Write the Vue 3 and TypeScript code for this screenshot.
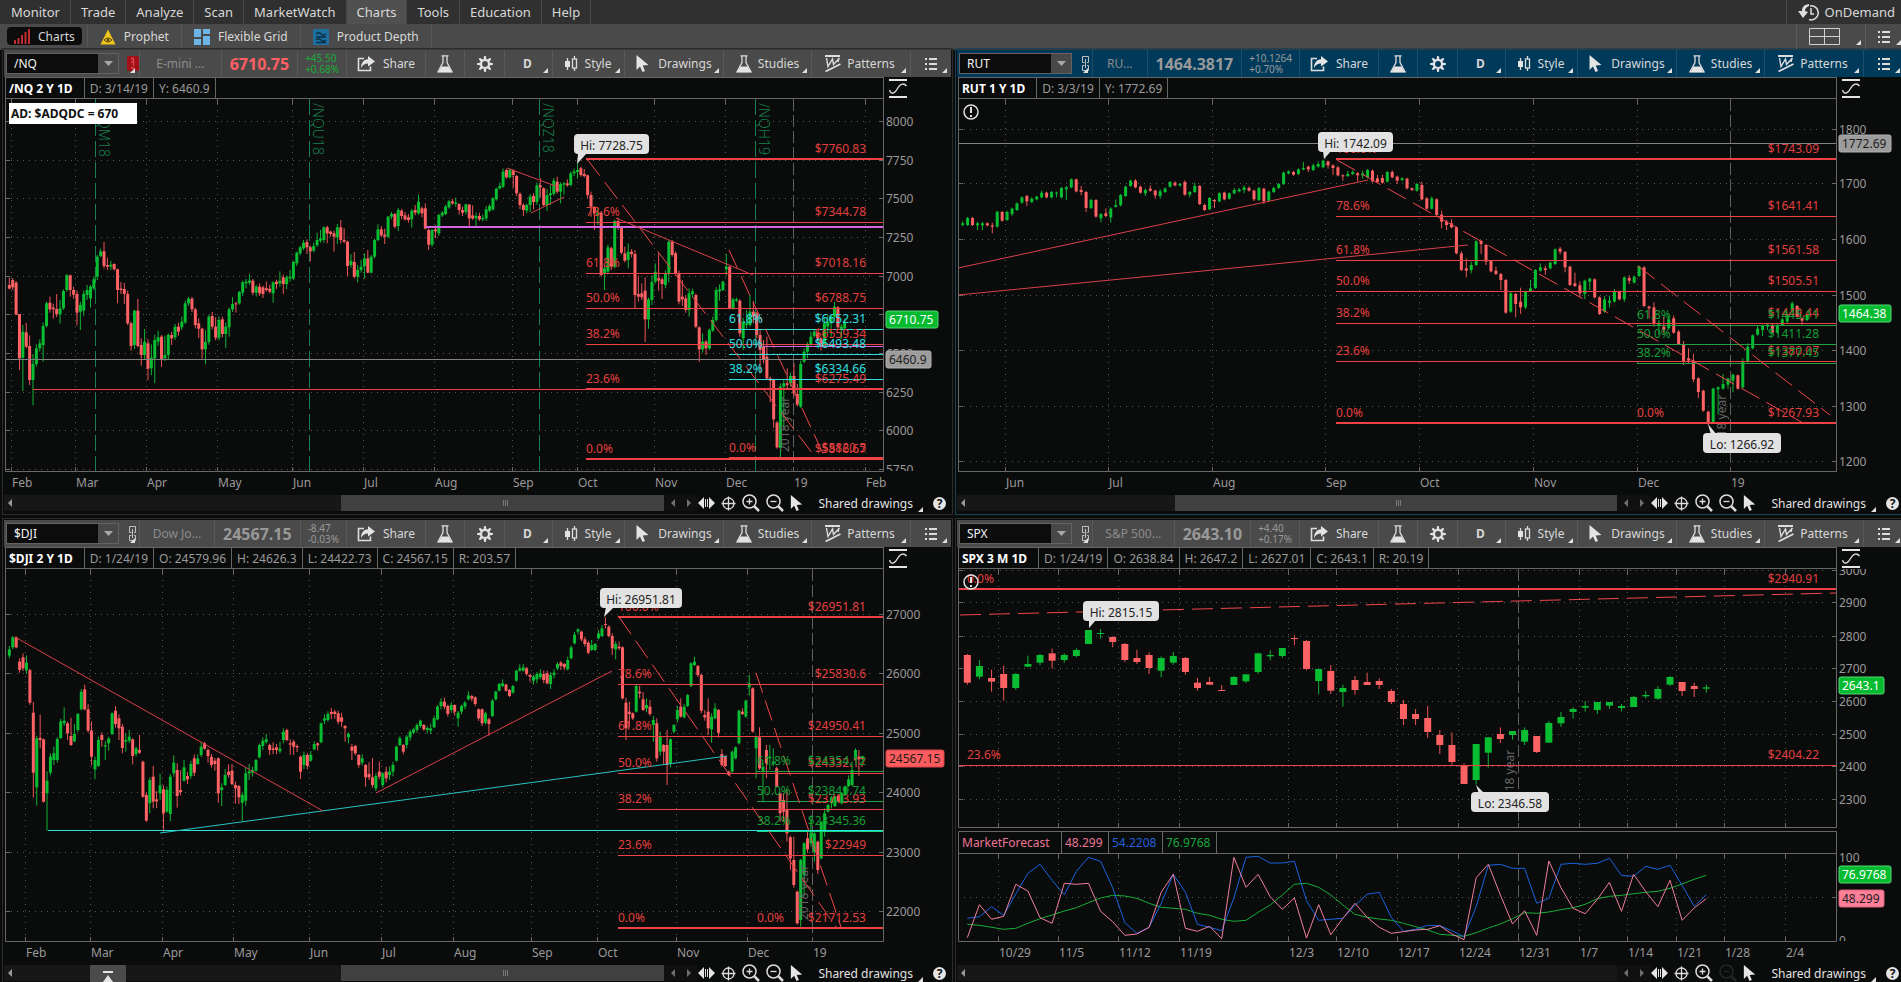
<script setup lang="ts">
interface Tick { at: number; label: string }
interface Line { x1: number; y1: number; x2: number; y2: number; kind: string }
interface Note { x: number; y: number; text: string; kind: string }
interface Balloon { x: number; y: number; w: number; text: string; tip: string }
interface Tag { y: number; w: number; text: string; kind: string }
interface Chart {
  symbol: string
  alert: boolean
  description: string
  price: string
  change: string[]
  tone: string
  title: string
  readings: string[]
  plotBottom: number
  xTicks: Tick[]
  yTicks: Tick[]
  yearAt: number
  yearTextY: number
  crosshair: number | null
  expirations: Note[]
  candles: Candle[]
  bodyWidth: number
  lines: Line[]
  notes: Note[]
  balloons: Balloon[]
  tags: Tag[]
  warning: boolean
  thumb: { left: number; width: number } | null
  zoomOut: boolean
}
interface Candle { x: number; top: number; height: number; high: number; low: number; up: boolean }

const RIGHT = 879

/* Candles are packed as "open close upperWick lowerWick", in thirds of a chart unit. */
function unpack(data: string, first: number, last: number, shift: number): Candle[] {
  const rows = data.split(',').map((r) => r.trim().split(' ').map(Number))
  const step = (last - first) / (rows.length - 1)
  return rows.map(([open, close, above, below], i) => {
    const top = Math.min(open, close)
    const bottom = Math.max(open, close)
    return {
      x: (first + i * step) / 3,
      top: (top + shift) / 3,
      height: Math.max(1, (bottom - top) / 3),
      high: (top - above + shift) / 3,
      low: (bottom + below + shift) / 3,
      up: close < open,
    }
  })
}

function ticks(data: string): Tick[] {
  return data.split(' ').map((pair) => {
    const [label, at] = pair.split('@')
    return { label, at: Number(at) }
  })
}

/* Thin horizontal lines sit on half units so that they fill one row of pixels. */
function line(x1: number, y1: number, x2: number, y2: number, kind: string): Line {
  const nudge = y1 === y2 && !kind.includes('heavy') ? 0.5 : 0
  return { x1, y1: y1 + nudge, x2, y2: y2 + nudge, kind }
}

/* Retracement levels: "y|percent|price", with an optional "!" for a heavy line. */
function levels(x: number, kind: string, data: string): { lines: Line[]; notes: Note[] } {
  const lines: Line[] = []
  const notes: Note[] = []
  for (const row of data.split(' ')) {
    const [yText, percent, price] = row.split('|')
    const heavy = yText.endsWith('!')
    const y = parseInt(yText, 10)
    const tone = percent === '0.0%' ? 'red' : kind
    lines.push(line(x, y, RIGHT, y, heavy ? tone + ' heavy' : tone))
    if (percent) notes.push({ x: Math.max(x, 10), y: y - 6, text: percent, kind: tone })
    if (price) notes.push({ x: 862, y: y - 6, text: '$' + price, kind: tone + ' end' })
  }
  return { lines, notes }
}

const nqFib = levels(582, 'red', '60!||7760.83 123|78.6%|7344.78 174|61.8%|7018.16 209|50.0%|6788.75 245|38.2%|6559.34 290!|23.6%|6275.49 360!|0.0%|5816.67')
const nqFib2 = levels(725, 'cyan', '230|61.8%|6652.31 255|50.0%|6493.48 280|38.2%|6334.66 359!|0.0%|5820.5')
const rutFib = levels(379, 'red', '60!|100.0%|1743.09 117|78.6%|1641.41 161|61.8%|1561.58 192|50.0%|1505.51 224|38.2%|1449.44 262|23.6%|1380.07 324!|0.0%|1267.93')
const rutFib2 = levels(680, 'green', '226|61.8%|1445.11 245|50.0%|1411.28 264|38.2%|1377.45 324|0.0%|')
const djiFib = levels(614, 'red', '48!|100.0%|26951.81 115|78.6%|25830.6 167|61.8%|24950.41 204|50.0%|24332.17 240|38.2%|23713.93 286|23.6%|22949 359!|0.0%|21712.53')
const djiFib2 = levels(753, 'green', '202|61.8%|24354.12 232|50.0%|23849.74 262!|38.2%|23345.36 359|0.0%|')
const spxFib = levels(1, 'red', '20!|0.0%|2940.91 196|23.6%|2404.22')

const charts: Chart[] = [
  {
    symbol: '/NQ', alert: true, description: 'E-mini ...', price: '6710.75', change: ['+45.50', '+0.68%'], tone: 'live',
    title: '/NQ 2 Y 1D', readings: ['D: 3/14/19', 'Y: 6460.9'], plotBottom: 372,
    xTicks: ticks('Feb@7 Mar@71 Apr@142 May@213 Jun@288 Jul@359 Aug@430 Sep@508 Oct@573 Nov@650 Dec@721 19@789 Feb@861'),
    yTicks: ticks('8000@22 7750@61 7500@99 7250@138 7000@177 @215 6500@254 6250@293 6000@331 5750@370'),
    yearAt: 789, yearTextY: 353, crosshair: 260,
    expirations: [
      { x: 91, y: 4, text: '/NQM18', kind: '' }, { x: 305, y: 4, text: '/NQU18', kind: '' },
      { x: 535, y: 4, text: '/NQZ18', kind: '' }, { x: 751, y: 4, text: '/NQH19', kind: '' },
    ],
    candles: unpack('585 596 22 2,570 592 5 8,578 674 5 0,672 805 0 35,803 725 20 100,727 770 28 5,768 870 32 15,870 822 30 76,822 775 12 8,775 760 12 10,765 708 10 50,708 640 5 4,638 658 18 10,653 658 12 28,657 673 45 8,673 655 25 28,655 603 5 5,600 556 4 5,556 600 2 20,600 614 10 12,612 668 10 38,665 645 10 55,662 612 10 15,615 600 15 15,625 590 5 28,595 568 10 6,560 500 5 10,498 484 8 4,484 528 28 8,525 530 22 10,530 524 12 10,522 538 2 4,538 600 2 40,596 600 20 12,597 612 18 30,612 700 10 5,700 768 5 14,765 662 3 12,662 768 35 4,765 795 20 32,795 755 38 12,760 836 12 34,835 803 40 20,805 750 15 75,755 742 20 12,740 808 5 22,805 795 58 8,795 735 5 12,735 745 10 20,742 710 8 8,710 725 12 12,712 695 15 8,697 640 8 5,640 626 5 8,626 658 5 8,658 705 5 10,700 716 15 28,716 778 3 28,778 756 35 45,756 680 5 8,678 710 12 8,710 743 28 8,743 690 10 8,688 732 8 10,732 710 12 42,712 658 5 28,658 642 20 8,640 643 5 25,640 606 3 4,608 577 5 10,580 575 8 15,578 572 20 6,572 608 5 8,608 590 5 12,590 610 10 8,592 612 5 12,595 600 20 5,596 605 12 5,610 577 3 28,575 582 6 15,580 572 28 10,562 582 8 30,582 562 5 15,565 560 20 10,565 516 3 5,520 488 3 8,490 472 5 6,475 458 8 5,456 472 8 20,472 484 5 30,482 468 10 5,466 450 22 5,452 445 25 6,450 412 3 8,412 430 5 30,425 432 3 8,430 440 8 45,442 412 10 20,412 450 22 10,450 455 35 5,455 528 3 30,525 512 20 8,516 560 30 5,560 540 15 17,540 530 20 8,528 505 15 38,505 548 25 2,548 500 5 2,500 450 4 5,450 418 15 4,418 436 10 6,434 440 18 22,440 380 2 5,380 372 6 8,372 410 3 5,408 360 6 15,362 378 5 10,376 388 10 4,382 390 10 8,388 362 5 25,360 368 15 8,370 335 22 5,355 370 5 12,355 416 15 2,420 464 5 16,464 420 3 6,418 424 12 20,430 375 4 8,376 368 5 5,372 350 5 4,352 334 4 4,334 340 8 5,342 338 15 8,342 360 2 14,360 368 10 10,366 343 2 8,344 385 2 26,376 385 30 5,385 378 10 28,378 388 10 5,388 384 10 6,385 358 10 8,362 348 5 4,358 325 3 4,328 296 3 4,295 288 10 4,290 245 10 4,240 262 4 4,262 240 4 4,242 255 4 38,258 310 3 8,312 345 5 12,345 360 5 18,362 345 4 8,345 320 8 22,318 336 8 22,336 286 8 8,286 292 22 30,295 345 3 4,345 315 18 18,315 310 25 30,312 272 8 5,275 305 15 5,305 282 5 35,284 280 5 30,280 286 12 4,285 250 5 4,250 244 8 8,246 240 20 20,235 255 5 5,252 258 15 5,256 315 2 10,315 350 10 30,350 370 0 50,375 368 15 30,368 555 5 5,550 535 8 50,545 472 8 8,475 530 5 10,530 393 4 5,393 412 10 8,412 488 4 5,490 512 20 5,510 485 25 25,485 492 8 10,492 615 12 42,612 620 55 15,610 622 30 8,602 688 40 68,688 628 5 28,630 576 20 15,575 545 25 5,565 572 75 30,568 582 6 45,585 550 8 10,552 455 4 25,455 495 5 5,490 550 6 8,550 635 8 8,620 628 50 20,625 660 10 8,660 610 15 20,612 604 8 10,615 710 4 5,712 778 3 38,778 755 25 10,755 775 5 20,775 720 5 5,722 690 10 4,690 600 8 5,604 598 15 28,600 575 3 3,538 530 38 18,530 655 3 3,655 628 5 4,632 628 5 4,632 730 4 10,745 695 12 35,705 700 40 10,705 665 50 5,665 680 32 20,670 735 4 10,735 780 15 70,770 808 20 12,800 865 60 5,865 872 5 65,870 988 4 25,998 1072 5 4,1074 890 10 30,890 880 10 130,880 885 45 10,880 858 10 10,858 910 38 10,912 944 30 5,950 822 10 4,815 785 10 4,785 762 5 20,762 740 15 5,738 725 5 5,730 745 4 8,745 768 4 14,768 700 15 4,710 695 20 20,700 680 5 40,680 650 14 4,652 712 4 8,718 710 8 30,715 695 10 5', 16, 2522, -27),
    bodyWidth: 3,
    lines: [
      line(29, 290, RIGHT, 290, 'red'), ...nqFib.lines, ...nqFib2.lines,
      line(422, 128, RIGHT, 128, 'purple heavy'), line(759, 247, RIGHT, 247, 'purple'),
      line(583, 60, 812, 359, 'red dashed'), line(725, 151, 821, 359, 'red dashed'),
      line(503, 69, 554, 88, 'red trend'), line(527, 114, 560, 98, 'red trend'), line(612, 119, 749, 176, 'red trend'),
    ],
    notes: [...nqFib.notes, ...nqFib2.notes],
    balloons: [{ x: 570, y: 35, w: 75, text: 'Hi: 7728.75', tip: 'M574 55 L573 65 L582 55 Z' }],
    tags: [{ y: 212, w: 52, text: '6710.75', kind: 'up' }, { y: 252, w: 45, text: '6460.9', kind: 'cursor' }],
    warning: false, thumb: { left: 51, width: 49 }, zoomOut: true,
  },
  {
    symbol: 'RUT', alert: false, description: 'RU...', price: '1464.3817', change: ['+10.1264', '+0.70%'], tone: 'selected',
    title: 'RUT 1 Y 1D', readings: ['D: 3/3/19', 'Y: 1772.69'], plotBottom: 372,
    xTicks: ticks('Jun@48 Jul@151 Aug@255 Sep@368 Oct@462 Nov@576 Dec@680 19@773'),
    yTicks: ticks('1800@30 1700@84 1600@140 1500@196 1400@251 1300@307 1200@362'),
    yearAt: 773, yearTextY: 351, crosshair: 44, expirations: [],
    candles: unpack('345 340 6 4,345 324 3 3,324 345 3 3,346 340 4 14,346 340 4 14,340 346 3 3,346 350 8 20,350 305 2 3,306 332 3 3,330 306 4 3,312 296 3 6,300 280 3 3,278 262 3 3,258 274 3 14,276 266 4 3,268 260 3 3,262 248 6 3,248 262 3 3,262 246 3 3,250 248 3 12,262 234 3 3,238 232 4 32,232 208 3 3,208 244 2 3,240 246 12 10,246 294 3 12,294 270 4 3,270 320 3 3,325 312 3 12,310 318 15 4,322 296 4 16,290 285 16 3,286 255 3 3,258 230 3 3,228 212 3 3,212 232 5 3,230 248 3 3,250 240 4 8,236 242 10 3,242 256 3 10,258 244 6 8,246 236 4 3,230 216 3 3,218 226 4 3,226 222 3 4,216 254 5 3,254 246 3 8,246 228 10 3,228 282 3 3,285 300 4 3,298 264 3 3,270 274 3 20,274 250 3 3,248 268 3 3,266 250 3 3,250 240 6 3,244 238 4 3,240 232 6 10,234 242 5 3,242 268 3 5,270 234 3 3,236 274 3 8,272 245 3 3,246 234 4 3,234 222 3 3,222 188 3 3,190 184 3 3,186 194 3 3,192 178 3 3,178 174 18 3,170 178 3 8,180 166 5 3,170 162 8 3,172 152 3 3,154 166 2 10,166 174 3 20,172 196 3 3,196 198 3 14,198 192 10 3,192 186 5 3,190 196 4 18,196 190 8 10,202 180 3 3,182 214 3 3,205 216 10 3,204 218 10 3,215 186 3 3,186 202 5 3,200 212 3 10,210 205 3 4,206 235 3 3,235 240 3 3,242 222 3 3,225 268 10 3,265 296 3 3,296 265 6 3,268 315 3 3,314 335 12 20,335 345 5 15,340 352 12 3,352 430 3 3,430 480 6 3,475 482 30 20,480 465 10 10,465 394 3 3,393 402 3 30,405 455 3 10,453 484 3 3,482 492 12 3,492 510 3 30,510 608 3 3,605 550 5 3,552 582 3 40,575 592 42 20,592 545 3 5,543 535 25 3,534 480 3 3,482 472 12 3,475 480 8 15,475 458 3 3,462 418 3 3,416 425 5 8,426 472 3 15,470 525 3 3,520 528 32 3,526 550 12 12,552 512 3 15,515 506 3 25,508 562 3 3,562 612 3 3,605 568 10 3,578 572 15 15,575 545 8 3,545 568 3 3,568 502 3 8,504 512 8 10,518 500 3 3,498 470 3 3,472 588 3 3,590 595 3 30,592 640 15 10,645 638 8 30,650 660 30 10,655 628 12 3,625 668 8 3,665 702 5 3,705 755 12 10,745 752 30 10,752 808 20 8,805 846 3 18,842 902 3 3,905 942 3 3,938 836 3 3,838 832 3 75,836 822 30 3,824 806 3 12,812 794 3 35,796 836 3 3,832 755 10 3,755 710 10 3,715 676 3 3,674 656 10 3,660 648 3 18,650 644 3 10,645 668 3 3,668 645 3 3,645 628 5 3,635 615 5 3,600 580 5 3,588 620 3 3,625 632 3 12,630 614 3 3', 17, 2550, 33),
    bodyWidth: 3,
    lines: [
      ...rutFib.lines, ...rutFib2.lines,
      line(1, 169, 411, 81, 'red trend'), line(1, 196, 511, 146, 'red trend'),
      line(380, 61, 846, 324, 'red dashed'), line(681, 167, 873, 316, 'red dashed'),
    ],
    notes: [...rutFib.notes, ...rutFib2.notes],
    balloons: [
      { x: 361, y: 33, w: 75, text: 'Hi: 1742.09', tip: 'M366 52 L367 60 L374 52 Z' },
      { x: 746, y: 334, w: 78, text: 'Lo: 1266.92', tip: 'M754 336 L751 325 L760 336 Z' },
    ],
    tags: [{ y: 36, w: 52, text: '1772.69', kind: 'cursor' }, { y: 206, w: 52, text: '1464.38', kind: 'up' }],
    warning: true, thumb: { left: 33, width: 67 }, zoomOut: true,
  },
  {
    symbol: '$DJI', alert: false, description: 'Dow Jo...', price: '24567.15', change: ['-8.47', '-0.03%'], tone: 'idle',
    title: '$DJI 2 Y 1D',
    readings: ['D: 1/24/19', 'O: 24579.96', 'H: 24626.3', 'L: 24422.73', 'C: 24567.15', 'R: 203.57'], plotBottom: 372,
    xTicks: ticks('Feb@21 Mar@86 Apr@158 May@229 Jun@305 Jul@377 Aug@449 Sep@527 Oct@593 Nov@672 Dec@743 19@808'),
    yTicks: ticks('27000@45 26000@104 25000@164 24000@223 23000@283 22000@342'),
    yearAt: 808, yearTextY: 351, crosshair: null, expirations: [],
    candles: unpack('437 418 10 8,412 382 4 5,382 412 3 3,455 480 10 8,442 475 12 8,480 458 22 12,480 578 4 6,608 788 32 75,832 685 8 55,684 690 70 25,688 875 2 3,850 812 28 112,788 740 10 8,750 730 20 15,750 687 5 8,684 634 8 3,640 632 40 8,640 670 5 20,678 705 55 3,694 672 30 3,660 612 3 6,598 545 8 3,538 598 14 3,598 662 15 6,662 740 28 25,778 750 10 30,768 690 10 3,675 690 8 20,710 706 12 40,700 686 6 22,672 610 3 3,602 642 14 10,625 655 12 35,650 714 8 16,695 690 20 30,692 680 20 8,688 738 3 25,732 715 5 8,720 728 45 4,755 860 3 3,855 932 8 3,880 810 8 30,800 875 32 20,868 874 25 20,850 826 35 20,838 910 12 55,905 840 10 3,912 800 8 22,790 758 22 10,780 858 20 35,840 846 60 10,812 772 22 3,798 808 12 14,798 762 10 8,745 788 12 10,762 745 12 3,735 710 15 6,700 716 5 3,720 738 5 20,740 765 8 8,752 762 8 20,745 850 3 28,840 832 12 48,825 795 18 3,785 795 22 8,782 822 20 4,825 835 10 45,828 862 3 20,878 855 8 55,872 790 18 15,790 784 22 20,788 780 10 12,782 750 3 3,742 705 4 4,708 692 10 12,696 688 16 5,705 720 4 15,715 720 18 12,712 720 10 12,724 716 20 6,690 665 10 10,660 690 4 4,700 704 12 30,695 710 6 25,708 712 5 14,740 785 3 22,765 735 10 12,735 768 6 10,752 735 12 3,718 702 8 3,700 706 3 15,697 640 3 3,632 625 12 10,630 612 8 5,606 612 12 15,605 612 5 14,610 635 8 8,622 635 14 15,648 655 3 40,682 672 5 18,710 722 8 28,708 730 3 6,735 765 3 8,758 745 12 8,765 802 3 28,792 802 35 8,802 825 58 8,835 798 8 8,785 800 30 8,825 790 3 8,785 805 15 12,795 785 15 15,785 765 10 14,752 710 3 3,705 685 6 3,705 725 3 8,705 680 5 10,682 665 6 10,668 658 5 5,660 645 5 8,648 632 3 5,645 658 3 4,660 654 5 10,662 655 14 10,652 625 8 3,628 590 5 3,588 575 10 10,575 590 12 8,588 612 4 8,600 585 8 8,585 605 2 12,625 608 5 25,605 588 4 8,590 578 5 8,568 556 12 3,558 566 3 8,562 582 3 6,598 625 3 8,598 640 3 8,638 610 5 5,628 642 5 35,618 572 5 3,568 545 3 3,542 522 3 3,528 520 12 3,524 542 3 3,540 558 3 3,548 528 3 3,512 482 3 3,482 475 12 3,482 472 10 3,475 492 4 5,495 500 4 15,512 500 5 12,508 492 6 12,502 490 12 5,492 510 10 10,490 520 8 3,522 495 8 15,495 488 10 10,475 462 6 6,458 468 5 12,462 472 3 8,478 450 10 3,445 412 5 3,400 374 8 3,365 358 3 8,365 388 3 6,388 402 8 8,398 428 5 5,420 405 15 3,420 402 3 3,385 370 10 3,378 355 10 3,342 345 20 10,350 378 4 4,378 415 8 20,418 402 8 30,410 415 15 5,412 565 3 3,578 655 15 35,605 612 30 40,610 625 3 5,605 528 3 3,545 550 18 15,568 600 22 3,595 585 20 12,590 612 20 5,645 630 12 50,640 745 15 10,725 680 15 12,705 725 3 38,705 765 45 60,760 688 3 12,665 645 3 5,628 600 12 10,590 620 25 3,622 590 8 3,588 555 3 3,528 460 3 3,465 455 15 3,468 495 3 6,495 602 3 8,615 622 15 10,605 655 40 20,658 620 10 40,625 595 15 3,600 668 3 15,732 765 15 5,740 768 3 3,785 795 3 3,785 725 3 3,745 712 3 3,700 602 3 3,605 612 10 3,620 572 3 3,532 520 25 25,535 665 3 3,715 680 3 90,682 775 30 5,782 770 12 95,720 760 15 45,745 740 35 35,760 755 40 8,775 830 5 3,850 910 3 25,870 905 20 30,900 970 60 25,982 1045 5 35,1050 1125 70 8,1145 1240 3 3,1230 1050 3 20,1095 1000 3 60,985 1018 20 10,1000 968 35 10,1025 970 3 30,995 1080 3 12,1045 935 3 3,965 910 15 15,905 885 3 3,880 862 3 15,888 860 3 3,858 875 3 3,880 850 3 3,855 830 3 3,828 808 12 3,825 780 25 3,750 720 5 3,740 748 20 50,748 740 3 3', 16, 2575, -177),
    bodyWidth: 3,
    lines: [
      ...djiFib.lines, ...djiFib2.lines,
      line(44, 261, RIGHT, 261, 'cyan'), line(156, 264, 723, 187, 'cyan trend'),
      line(11, 68, 319, 242, 'red trend'), line(372, 224, 608, 102, 'red trend'),
      line(615, 48, 832, 358, 'red dashed'), line(752, 104, 837, 358, 'red dashed'),
    ],
    notes: [...djiFib.notes, ...djiFib2.notes],
    balloons: [{ x: 596, y: 19, w: 82, text: 'Hi: 26951.81', tip: 'M602 38 L600 48 L610 38 Z' }],
    tags: [{ y: 181, w: 58, text: '24567.15', kind: 'down' }],
    warning: false, thumb: { left: 51, width: 49 }, zoomOut: true,
  },
  {
    symbol: 'SPX', alert: false, description: 'S&P 500...', price: '2643.10', change: ['+4.40', '+0.17%'], tone: 'idle',
    title: 'SPX 3 M 1D',
    readings: ['D: 1/24/19', 'O: 2638.84', 'H: 2647.2', 'L: 2627.01', 'C: 2643.1', 'R: 20.19'], plotBottom: 258,
    xTicks: ticks('10/29@41 11/5@101 11/12@161 11/19@222 12/3@331 12/10@379 12/17@440 12/24@501 12/31@561 1/7@622 1/14@670 1/21@719 1/28@767 2/4@828'),
    yTicks: ticks('3000@1 2900@33 2800@67 2700@99 2600@132 2500@165 2400@197 2300@230'),
    yearAt: 561, yearTextY: 236, crosshair: null, expirations: [],
    candles: unpack('435 518 3 6,500 468 18 8,504 515 25 30,492 534 25 38,534 492 3 6,470 462 25 2,458 435 3 8,430 452 14 24,450 435 5 8,438 420 5 4,402 360 0 0,372 369 12 14,381 396 2 16,402 450 3 6,444 456 25 6,435 474 8 18,482 444 5 20,458 438 12 6,444 486 3 8,518 534 14 8,516 524 15 0,540 543 15 0,525 501 3 0,514 493 0 5,486 430 2 6,439 435 14 12,438 414 0 6,384 387 8 18,393 477 3 4,513 477 0 40,483 542 18 10,546 534 10 44,510 540 12 14,516 525 28 0,513 525 8 12,543 576 6 6,582 627 12 18,612 627 15 18,624 666 36 18,675 705 15 27,705 756 38 10,765 822 5 0,810 702 0 14,728 682 0 45,672 687 20 12,675 663 0 14,695 660 8 10,678 726 0 3,698 639 6 0,640 621 15 10,606 597 6 20,593 588 15 12,600 576 0 12,587 576 0 10,594 588 6 10,591 561 3 0,559 555 12 6,566 537 8 3,524 501 3 4,516 543 0 15,528 537 10 24,536 532 8 12', 31, 2248, -177),
    bodyWidth: 7,
    lines: [...spxFib.lines, line(3, 46, RIGHT, 24, 'red dashed')],
    notes: spxFib.notes,
    balloons: [
      { x: 126, y: 32, w: 76, text: 'Hi: 2815.15', tip: 'M132 51 L132 59 L139 51 Z' },
      { x: 514, y: 223, w: 78, text: 'Lo: 2346.58', tip: 'M522 225 L519 216 L528 225 Z' },
    ],
    tags: [{ y: 108, w: 45, text: '2643.1', kind: 'up' }],
    warning: true, thumb: null, zoomOut: false,
  },
]

function curve(values: number[]): string {
  const step = (2248 - 31) / (values.length - 1)
  return values.map((v, i) => `${((31 + i * step) / 3).toFixed(1)},${((v - 177) / 3).toFixed(1)}`).join(' ')
}
const forecast = [
  { kind: 'long', points: curve([1243, 1246, 1252, 1258, 1255, 1240, 1226, 1215, 1203, 1193, 1178, 1164, 1156, 1158, 1165, 1180, 1192, 1195, 1198, 1210, 1216, 1228, 1234, 1231, 1207, 1185, 1155, 1123, 1120, 1132, 1155, 1185, 1213, 1222, 1227, 1231, 1240, 1250, 1260, 1273, 1276, 1279, 1268, 1254, 1242, 1226, 1208, 1210, 1206, 1199, 1193, 1183, 1166, 1159, 1156, 1151, 1147, 1144, 1135, 1122, 1108, 1096]) },
  { kind: 'middle', points: curve([1225, 1220, 1190, 1216, 1152, 1090, 1063, 1111, 1154, 1084, 1042, 1054, 1133, 1238, 1270, 1252, 1180, 1093, 1147, 1243, 1252, 1262, 1163, 1042, 1039, 1059, 1059, 1054, 1172, 1231, 1228, 1225, 1186, 1153, 1147, 1222, 1264, 1258, 1246, 1247, 1262, 1280, 1190, 1066, 1063, 1075, 1075, 1180, 1165, 1063, 1060, 1063, 1060, 1045, 1096, 1099, 1069, 1078, 1066, 1126, 1189, 1154]) },
  { kind: 'short', points: curve([1283, 1184, 1228, 1219, 1123, 1143, 1223, 1240, 1120, 1123, 1120, 1204, 1235, 1276, 1272, 1252, 1147, 1093, 1255, 1264, 1249, 1286, 1042, 1132, 1093, 1160, 1198, 1164, 1284, 1184, 1274, 1225, 1180, 1222, 1252, 1270, 1265, 1260, 1258, 1247, 1272, 1289, 1103, 1063, 1155, 1242, 1202, 1276, 1053, 1133, 1195, 1211, 1168, 1117, 1204, 1093, 1145, 1190, 1111, 1231, 1194, 1166]) },
]

const menus = ['Monitor', 'Trade', 'Analyze', 'Scan', 'MarketWatch', 'Charts', 'Tools', 'Education', 'Help']
const views = ['Charts', 'Prophet', 'Flexible Grid', 'Product Depth']
const tools = ['Share', 'flask', 'gear', 'D', 'Style', 'Drawings', 'Studies', 'Patterns', 'list']
const toolNames: Record<string, string> = { flask: 'Edit studies', gear: 'Chart settings', D: 'Timeframe', list: 'Chart menu' }
const withCorner = ['D', 'Style', 'Drawings', 'Studies', 'Patterns', 'list']
const spokes = [0, 45, 90, 135, 180, 225, 270, 315]
</script>

<template>
  <div class="app">
    <nav class="menu" aria-label="Main">
      <a v-for="m in menus" :key="m" href="#" :class="{ active: m === 'Charts' }">{{ m }}</a>
      <button class="ondemand" type="button">
        <svg width="22" height="18" viewBox="0 0 22 18" aria-hidden="true">
          <path d="M13 3 A7 7 0 1 1 12 16.500" fill="none" stroke="#ddd" stroke-width="1.500" />
          <path d="M12 1 C6 2 5 5 5 8 L1 8 L6 15 L11 9 L8 8 C8 6 9 4 12 3 Z" fill="#ddd" />
          <path d="M14 5 V11 H17" fill="none" stroke="#ddd" stroke-width="1.500" />
        </svg>
        <span>OnDemand</span>
      </button>
    </nav>

    <nav class="views" aria-label="Charts">
      <a v-for="v in views" :key="v" href="#" :class="{ active: v === 'Charts' }">
        <svg v-if="v === 'Charts'" width="16" height="15" viewBox="0 0 16 15" aria-hidden="true">
          <path d="M1 15V11M4.500 15V9M8 15V6M11.500 15V3M15 15V0" stroke="#c22c30" stroke-width="2" />
        </svg>
        <svg v-else-if="v === 'Prophet'" width="16" height="16" viewBox="0 0 16 16" aria-hidden="true">
          <path d="M8 0.500 L15.500 15.500 H0.500 Z" fill="#eec61c" />
          <path d="M4 11 Q8 7 12 11 Q8 15 4 11 Z" fill="none" stroke="#5a4a10" />
          <circle cx="8" cy="11" r="1.500" fill="#5a4a10" />
        </svg>
        <svg v-else-if="v === 'Flexible Grid'" width="16" height="16" viewBox="0 0 16 16" aria-hidden="true">
          <path d="M0 0H7V8H0Z M9 0H16V5H9Z M0 10H7V16H0Z M9 7H16V16H9Z" fill="#6db5e8" />
        </svg>
        <svg v-else width="16" height="16" viewBox="0 0 16 16" aria-hidden="true">
          <rect width="16" height="16" rx="1" fill="#1d6f9f" />
          <path d="M3 5 Q5.500 2.500 8 5 T13 5 M3 8 H13 M3 11 Q5.500 8.500 8 11 T13 11 M3 13.500H13" fill="none" stroke="#0d3046" stroke-width="1.300" />
        </svg>
        <span>{{ v }}</span>
      </a>
      <span class="spacer"></span>
      <button class="cell grid corner" type="button" aria-label="Grid layout">
        <svg width="31" height="17" viewBox="0 0 31 17" aria-hidden="true">
          <path d="M0.500 0.500H30.500V16.500H0.500ZM15.500 0.500V16.500M0.500 8.500H30.500" fill="none" stroke="#d0d0d0" />
        </svg>
      </button>
      <button class="cell more corner" type="button" aria-label="Views menu">
        <svg width="12" height="12" viewBox="0 0 12 12" aria-hidden="true">
          <path d="M0 1H2M4 1H12M0 6H2M4 6H12M0 11H2M4 11H12" stroke="#ddd" stroke-width="2" />
        </svg>
      </button>
    </nav>

    <main class="panels">
      <section v-for="(c, n) in charts" :key="c.symbol" class="panel" :class="c.tone" :aria-label="c.symbol">
        <div class="toolbar">
          <div class="symbol corner">
            <div class="combo">
              <input type="text" :value="c.symbol" aria-label="Symbol" />
              <button type="button" aria-label="Recent symbols">
                <svg width="9" height="5" viewBox="0 0 9 5" aria-hidden="true"><path d="M0 0H9L4.500 5Z" fill="#a8a8a8" /></svg>
              </button>
            </div>
            <button class="link" type="button" aria-label="Link symbol">
              <svg v-if="c.alert" width="12" height="16" viewBox="0 0 12 16" aria-hidden="true">
                <rect width="12" height="15" rx="2" fill="#a41018" />
                <path d="M4 2.500H6.500V6H4M6.500 6V10M4 12H7" fill="none" stroke="#d84a4a" stroke-width="1.300" />
              </svg>
              <svg v-else width="8" height="16" viewBox="0 0 8 16" aria-hidden="true">
                <path d="M2.500 6.500H0.500V0.500H6.500V6.500H5 M2.500 9.500H0.500V14.500H6.500V9.500H5 M3.500 3V12" fill="none" stroke="#c0c0c0" />
              </svg>
            </button>
          </div>
          <div class="description">{{ c.description }}</div>
          <div class="price">{{ c.price }}</div>
          <div class="change"><span>{{ c.change[0] }}</span><span>{{ c.change[1] }}</span></div>
          <button
            v-for="t in tools" :key="t" type="button" class="tool"
            :class="['tool-' + t.toLowerCase(), { corner: withCorner.includes(t) }]" :aria-label="toolNames[t] ?? t"
          >
            <svg v-if="t === 'Share'" width="18" height="16" viewBox="0 0 18 16" aria-hidden="true">
              <path d="M7 2.500H1.500V14.500H13.500V10.500" fill="none" stroke="#ddd" stroke-width="1.600" />
              <path d="M11 0 L18 5.500 L11 10.500 V7.500 C7.500 7.500 5.500 9 4 12 C4 7 6.500 3.500 11 3.200 Z" fill="#e4e4e4" />
            </svg>
            <svg v-else-if="t === 'flask' || t === 'Studies'" width="16" height="18" viewBox="0 0 16 18" aria-hidden="true">
              <path d="M4.500 0.800H11.500M6 1V7.500L1 16.800H15L10 7.500V1" fill="none" stroke="#ddd" stroke-width="1.300" />
              <path d="M4.500 11.500H11.500L14.800 17.300H1.200Z" fill="#e4e4e4" />
            </svg>
            <svg v-else-if="t === 'gear'" width="16" height="16" viewBox="0 0 16 16" aria-hidden="true">
              <circle cx="8" cy="8" r="4" fill="none" stroke="#e4e4e4" stroke-width="2.200" />
              <path v-for="a in spokes" :key="a" d="M6.500 3.500L7.200 0H8.800L9.500 3.500Z" fill="#e4e4e4" :transform="`rotate(${a} 8 8)`" />
            </svg>
            <svg v-else-if="t === 'Style'" width="14" height="16" viewBox="0 0 14 16" aria-hidden="true">
              <path d="M3.500 2V14M10.500 0V3M10.500 12V15" stroke="#ddd" stroke-width="1.300" />
              <rect x="1" y="5" width="5" height="6" fill="#e4e4e4" />
              <rect x="8.500" y="3" width="4" height="9" fill="none" stroke="#ddd" stroke-width="1.300" />
            </svg>
            <svg v-else-if="t === 'Drawings'" width="13" height="17" viewBox="0 0 13 17" aria-hidden="true">
              <path d="M0.500 0V15L4 11.500L6.500 17L9 16L6.700 10.500L12.500 10Z" fill="#e4e4e4" />
            </svg>
            <svg v-else-if="t === 'Patterns'" width="16" height="17" viewBox="0 0 16 17" aria-hidden="true">
              <path d="M0 1H15M0.500 16.500L15.500 9" stroke="#ddd" stroke-width="1.800" />
              <path d="M1.500 3L3 11.500L7.500 4L8.500 9.500L14.500 3M14 3L13 7" fill="none" stroke="#ddd" stroke-width="1.400" />
            </svg>
            <svg v-else-if="t === 'list'" width="12" height="12" viewBox="0 0 12 12" aria-hidden="true">
              <path d="M0 1H2M4 1H12M0 6H2M4 6H12M0 11H2M4 11H12" stroke="#ddd" stroke-width="2" />
            </svg>
            <b v-if="t === 'D'">D</b>
            <span v-else-if="!['flask', 'gear', 'list'].includes(t)">{{ t }}</span>
          </button>
        </div>

        <div class="info">
          <div class="strip">
            <strong>{{ c.title }}</strong>
            <span v-for="r in c.readings" :key="r">{{ r }}</span>
          </div>
          <button type="button" aria-label="Fit axis">
            <svg width="18" height="19" viewBox="0 0 18 19" aria-hidden="true">
              <path d="M0 1H18M0 18H18" stroke="#e4e4e4" stroke-width="2" />
              <path d="M0.500 11C2 16 5.500 15 8.500 9.500S15 4 17.500 7" fill="none" stroke="#ddd" stroke-width="1.300" />
            </svg>
          </button>
        </div>

        <svg class="chart" viewBox="0 0 947 396" role="img" :aria-label="c.title">
          <defs>
            <clipPath :id="'plot' + n"><rect x="1" y="0" width="879" :height="c.plotBottom" /></clipPath>
            <clipPath :id="'axis' + n"><rect x="879" y="0" width="68" height="372" /></clipPath>
          </defs>
          <g v-for="(t, i) in c.xTicks" :key="'x' + i">
            <line v-if="t.at !== c.yearAt" class="dots" :x1="t.at + 0.5" y1="5" :x2="t.at + 0.5" :y2="c.plotBottom" />
            <path class="tick" :d="`M${t.at + 0.5} 0V5M${t.at + 0.5} ${c.plotBottom - 4}V${c.plotBottom}`" />
            <text class="axis" :x="t.at + 1" y="388">{{ t.label }}</text>
          </g>
          <g v-for="(t, i) in c.yTicks" :key="'y' + i">
            <line class="dots" x1="7" :y1="t.at + 0.5" x2="868" :y2="t.at + 0.5" />
            <path class="tick" :d="`M1 ${t.at + 0.5}H6M875 ${t.at + 0.5}H880`" />
            <text class="axis" x="882" :y="t.at + 5" :clip-path="`url(#axis${n})`">{{ t.label }}</text>
          </g>
          <line class="year" :x1="c.yearAt + 0.5" y1="0" :x2="c.yearAt + 0.5" :y2="c.plotBottom" />
          <g v-for="e in c.expirations" :key="e.text">
            <line class="expiry" :x1="e.x + 0.5" y1="0" :x2="e.x + 0.5" :y2="c.plotBottom" />
            <text class="expiry-text" :transform="`translate(${e.x + 4} ${e.y}) rotate(90)`">{{ e.text }}</text>
          </g>

          <g :clip-path="`url(#plot${n})`">
            <g v-for="(k, i) in c.candles" :key="i" :class="k.up ? 'up' : 'down'">
              <line :x1="k.x" :y1="k.high" :x2="k.x" :y2="k.low" />
              <rect :x="k.x - c.bodyWidth / 2" :y="k.top" :width="c.bodyWidth" :height="k.height" />
            </g>
            <text class="year-text" :transform="`translate(${c.yearAt - 4} ${c.yearTextY}) rotate(-90)`">2018 year</text>
            <line v-for="(l, i) in c.lines" :key="i" :class="'draw ' + l.kind" :x1="l.x1" :y1="l.y1" :x2="l.x2" :y2="l.y2" />
            <line v-if="c.crosshair !== null" class="crosshair" x1="1" :y1="c.crosshair + 0.5" x2="880" :y2="c.crosshair + 0.5" />
            <text v-for="(t, i) in c.notes" :key="i" :class="'note ' + t.kind" :x="t.x" :y="t.y">{{ t.text }}</text>
          </g>

          <g v-for="b in c.balloons" :key="b.text" class="balloon">
            <path :d="b.tip" />
            <rect :x="b.x" :y="b.y" :width="b.w" height="20" rx="4" />
            <text :x="b.x + b.w / 2" :y="b.y + 16">{{ b.text }}</text>
          </g>

          <g v-if="c.symbol === '/NQ'">
            <rect x="5" y="4" width="128" height="21" fill="#fff" />
            <text class="banner" x="7" y="19">AD: $ADQDC = 670</text>
          </g>
          <g v-if="c.warning">
            <circle cx="14" cy="13" r="7" fill="none" stroke="#e0e0e0" stroke-width="1.500" />
            <path d="M14 8V14M14 16V18" stroke="#e0e0e0" stroke-width="2" />
          </g>

          <path class="frame" :d="`M1.500 0V${c.plotBottom + 0.5}H879.500V0`" />

          <g v-if="c.symbol === 'SPX'" class="study">
            <g v-for="t in c.xTicks" :key="t.label">
              <line v-if="t.at !== c.yearAt" class="dots" :x1="t.at + 0.5" y1="289" :x2="t.at + 0.5" y2="372" />
              <line v-else class="year" :x1="t.at + 0.5" y1="284" :x2="t.at + 0.5" y2="372" />
              <path class="tick" :d="`M${t.at + 0.5} 284V289M${t.at + 0.5} 368V372`" />
            </g>
            <line class="dots" x1="7" y1="328.5" x2="868" y2="328.5" />
            <polyline v-for="f in forecast" :key="f.kind" :class="f.kind" :points="f.points" />
            <path class="frame" d="M1.500 262.500H879.500V372.500H1.500ZM1.500 284.500H879.500M104.500 262V284M151.500 262V284M205.500 262V284M259.500 262V284M875 328.500H880" />
            <text class="short" x="5" y="278">MarketForecast</text>
            <text class="short" x="108" y="278">48.299</text>
            <text class="middle" x="155" y="278">54.2208</text>
            <text class="long" x="209" y="278">76.9768</text>
            <text class="axis" x="882" y="293">100</text>
            <text class="axis" x="882" y="376" clip-path="url(#axis3)">0</text>
            <rect class="tag up" x="882" y="297" width="52" height="17" rx="2" /><text class="tag-text" x="885" y="310">76.9768</text>
            <rect class="tag pink" x="882" y="321" width="45" height="17" rx="2" /><text class="tag-text dark" x="885" y="334">48.299</text>
          </g>

          <g v-for="t in c.tags" :key="t.text">
            <rect :class="'tag ' + t.kind" x="882" :y="t.y" :width="t.w" height="17" rx="2" />
            <text class="tag-text" :class="{ dark: t.kind !== 'up' }" x="885" :y="t.y + 13">{{ t.text }}</text>
          </g>
        </svg>

        <div class="bottom">
          <div class="track">
            <svg class="arrow" width="5" height="8" viewBox="0 0 5 8" aria-hidden="true"><path d="M4 0V8L0 4Z" fill="#999" /></svg>
            <div v-if="c.thumb" class="thumb" :style="{ left: c.thumb.left + '%', width: c.thumb.width + '%' }"></div>
            <button v-if="c.symbol === '$DJI'" class="drawer" type="button" aria-label="Show drawer">
              <svg width="12" height="12" viewBox="0 0 12 12" aria-hidden="true"><path d="M1 1H11" stroke="#e4e4e4" stroke-width="2" /><path d="M6 4L11 11H1Z" fill="#e4e4e4" /></svg>
            </button>
          </div>
          <div class="pager">
            <button type="button" aria-label="Scroll left"><svg width="4" height="8" viewBox="0 0 4 8" aria-hidden="true"><path d="M4 0V8L0 4Z" fill="#707070" /></svg></button>
            <button type="button" aria-label="Scroll right"><svg width="4" height="8" viewBox="0 0 4 8" aria-hidden="true"><path d="M0 0V8L4 4Z" fill="#707070" /></svg></button>
          </div>
          <div class="zooms">
            <button type="button" aria-label="Expand">
              <svg width="17" height="12" viewBox="0 0 17 12" aria-hidden="true"><path d="M0 6L6 0V12ZM17 6L11 0V12Z" fill="#e4e4e4" /><path d="M7.500 2V10M9.500 2V10" stroke="#ddd" /></svg>
            </button>
            <button type="button" aria-label="Crosshair">
              <svg width="15" height="15" viewBox="0 0 15 15" aria-hidden="true"><circle cx="7.500" cy="7.500" r="5.500" fill="none" stroke="#ddd" stroke-width="1.300" /><path d="M0.500 7.500H14.500M7.500 0.500V14.500" stroke="#ddd" stroke-width="1.300" /></svg>
            </button>
            <button type="button" aria-label="Zoom in">
              <svg width="18" height="18" viewBox="0 0 18 18" aria-hidden="true"><circle cx="7.500" cy="7.500" r="6.500" fill="none" stroke="#ddd" stroke-width="1.500" /><path d="M12.500 12.500L17 17" stroke="#ddd" stroke-width="2.500" /><path d="M4.500 7.500H10.500M7.500 4.500V10.500" stroke="#ddd" stroke-width="1.300" /></svg>
            </button>
            <button type="button" aria-label="Zoom out" :disabled="!c.zoomOut">
              <svg width="18" height="18" viewBox="0 0 18 18" aria-hidden="true"><circle cx="7.500" cy="7.500" r="6.500" fill="none" stroke="#ddd" stroke-width="1.500" /><path d="M12.500 12.500L17 17" stroke="#ddd" stroke-width="2.500" /><path d="M4.500 7.500H10.500" stroke="#ddd" stroke-width="1.300" /></svg>
            </button>
            <button type="button" aria-label="Pointer">
              <svg width="13" height="16" viewBox="0 0 13 17" aria-hidden="true"><path d="M0.500 0V15L4 11.500L6.500 17L9 16L6.700 10.500L12.500 10Z" fill="#e4e4e4" /></svg>
            </button>
          </div>
          <button class="shared corner" type="button">Shared drawings</button>
          <button class="help" type="button" aria-label="Help">?</button>
        </div>
      </section>
    </main>
  </div>
</template>

<style>
body {
  background: #0a0a0a;
  overflow: hidden;
}
</style>

<style scoped>
.app {
  height: 100vh;
  overflow: hidden;
  background: #0a0b0b;
  color: #d8d8d8;
  font-family: "Noto Sans", "Open Sans", sans-serif;
  font-size: 12px;
}
.app * { box-sizing: border-box; }
button, input { font: inherit; color: inherit; }
button { background: none; border: 0; padding: 0; display: flex; align-items: center; justify-content: center; }
a { color: inherit; text-decoration: none; }
svg { display: block; flex: none; }

.menu, .views { display: flex; padding-left: 2px; }
.menu { height: 24px; padding-left: 1px; background: #303030; font-size: 13px; }
.menu a {
  display: flex;
  align-items: center;
  padding: 0 10px;
  border-right: 1px solid #484848;
}
.menu .active { background: #505050; }
.ondemand { margin-left: auto; padding: 0 6px 0 10px; gap: 6px; border-left: 1px solid #484848; font-size: 13px; }

.views { height: 26px; background: #4a4a4a; border-bottom: 1px solid #383838; }
.views a { display: flex; align-items: center; gap: 8px; padding: 0 12px; border-right: 1px solid #585858; }
.views a.active { margin: 3px 5px 4px; padding: 0 7px; border: 0; border-radius: 4px; background: #0c0c0c; }
.views a.active + a { border-left: 1px solid #585858; }
.spacer { flex: 1; }
.cell { border-left: 1px solid #5c5c5c; }
.grid { width: 69px; padding-right: 14px; }
.more { width: 36px; padding-right: 0; }

.corner { position: relative; }
.corner::after {
  content: "";
  position: absolute;
  right: 4px;
  bottom: 4px;
  border-style: solid;
  border-width: 0 0 5px 5px;
  border-color: transparent transparent #e0e0e0 transparent;
}
.more.corner::after { right: 0; }

.panels {
  display: grid;
  grid-template-columns: minmax(0, 1fr) minmax(0, 1fr);
  width: calc(100% + 3px);
  padding-left: 4px;
  column-gap: 6px;
  row-gap: 7px;
  background: #0a0b0b;
}
.panel { padding-bottom: 2px; outline: 1px solid #2c2c2c; outline-offset: 1px; }
.panel.selected { outline-color: #1b4258; }

.toolbar { display: flex; height: 27px; background: #4a4a4a; }
.selected .toolbar { background: #003a5b; }
.toolbar > * { border-right: 1px solid #595959; }
.selected .toolbar > * { border-right-color: #1c4d6b; }
.toolbar > :last-child { border-right: 0; }
.symbol { display: flex; align-items: center; flex: none; width: 136px; padding-left: 2px; gap: 8px; }
.combo { display: flex; width: 113px; height: 21px; border: 1px solid #626262; background: #0c0c0c; }
.combo input { flex: 1; width: 0; min-width: 0; padding: 0 0 0 7px; border: 0; outline: 0; background: transparent; color: #f2f2f2; }
.combo button { width: 20px; background: #484848; }
.link { width: 12px; height: 20px; }
.description { display: flex; flex: 1; align-items: center; justify-content: center; min-width: 0; overflow: hidden; color: #8c8c8c; }
.price { display: flex; align-items: center; padding: 0 8px; color: #999; font-size: 16px; font-weight: 700; }
.live .price { color: #ff5f62; }
.change { display: flex; flex-direction: column; justify-content: center; padding: 0 7px; color: #999; font-size: 10px; line-height: 11px; }
.live .change { color: #18ad38; }
.tool { flex: none; gap: 8px; }
.tool-share { width: 79px; }
.tool-flask { width: 39px; }
.tool-gear { width: 40px; }
.tool-d { width: 48px; }
.tool-d b { padding-right: 2px; }
.tool-style { width: 72px; padding-right: 2px; gap: 7px; }
.tool-drawings { width: 99px; gap: 9px; }
.tool-studies { width: 88px; gap: 6px; }
.tool-patterns { width: 99px; gap: 6px; padding-right: 2px; }
.tool-list { width: 40px; }

.info { display: flex; height: 22px; color: #9a9a9a; }
.strip { display: flex; flex: 876; margin-left: 1px; border: 1px solid #666; }
.strip > * { display: flex; align-items: center; padding: 0 5px; border-right: 1px solid #666; white-space: nowrap; }
.strip strong { padding: 0 11px 0 3px; color: #fff; }
.info button { flex: 67; justify-content: flex-start; }
.info button svg { margin-left: 5px; }

.chart { width: 100%; height: auto; font-size: 12px; }
.dots { stroke: #585858; stroke-dasharray: 1 5; }
.tick, .frame { fill: none; stroke: #686868; }
.year { stroke: #606060; stroke-dasharray: 12 4; }
.year-text { fill: #666; }
.axis { fill: #9a9a9a; }
.expiry { stroke: #178051; stroke-dasharray: 16 5; }
.expiry-text { fill: #17804f; font-size: 14px; font-weight: 300; }
.crosshair { stroke: #828282; }
.up line { stroke: #12b434; }
.up rect { fill: #08bd31; }
.down line { stroke: #ed5558; }
.down rect { fill: #ff6264; }
.draw { stroke-width: 1; }
.draw.heavy { stroke-width: 2; }
.draw.red { stroke: #ee4246; }
.draw.trend { stroke: #d8414a; }
.draw.cyan { stroke: #32dfdf; }
.draw.cyan.trend { stroke: #28c4c2; }
.draw.green { stroke: #22a044; }
.draw.green.heavy { stroke: #13dc80; }
.draw.purple { stroke: #d465e2; }
.draw.dashed { stroke: #f0474c; stroke-dasharray: 21 8; }
.note.red { fill: #e2403f; }
.note.cyan { fill: #2de0e4; }
.note.green { fill: #139f36; }
.note.end { text-anchor: end; }
.balloon path, .balloon rect { fill: #e2e2e2; }
.balloon text { fill: #222; text-anchor: middle; }
.banner { fill: #111; font-weight: 700; }
.study polyline { fill: none; stroke-width: 1; }
.study polyline.long { stroke: #18ae38; }
.study polyline.middle { stroke: #1762e0; }
.study polyline.short { stroke: #f07f9c; }
text.long { fill: #18a838; }
text.middle { fill: #2260d8; }
text.short { fill: #ea7693; }
.tag.up { fill: #04bb30; stroke: #58d878; }
.tag.down { fill: #ff5c5f; stroke: #d84348; }
.tag.cursor { fill: #9c9c9c; stroke: #b2b2b2; }
.tag.pink { fill: #ff7f98; stroke: #d8647c; }
.tag-text { fill: #fff; }
.tag-text.dark { fill: #1c1c1c; }

.bottom { display: flex; align-items: center; height: 16px; }
.track { position: relative; flex: 1; align-self: stretch; background: #171717; }
.arrow { margin: 4px 0 0 4px; }
.thumb { position: absolute; top: 0; bottom: 0; background: #404040; }
.thumb::after {
  content: "";
  position: absolute;
  left: 50%;
  top: 5px;
  width: 5px;
  height: 6px;
  background: repeating-linear-gradient(90deg, #787878 0 1px, transparent 1px 2px);
}
.drawer { position: absolute; left: 13%; top: 0; width: 36px; height: 18px; background: #4b4b4b; align-items: flex-end; }
.pager { display: flex; align-self: stretch; justify-content: center; gap: 12px; width: 34px; background: #101010; }
.zooms { display: flex; align-items: center; gap: 6px; }
.zooms button { height: 15px; }
.zooms button:disabled { opacity: 0.12; }
.shared { margin-left: 12px; padding: 0 10px 0 3px; color: #e2e2e2; }
.shared.corner::after { right: 0; bottom: 0; }
.help { width: 13px; height: 13px; margin: 0 5px 0 10px; border-radius: 50%; background: #e4e4e4; color: #111; font-weight: 700; }
</style>
